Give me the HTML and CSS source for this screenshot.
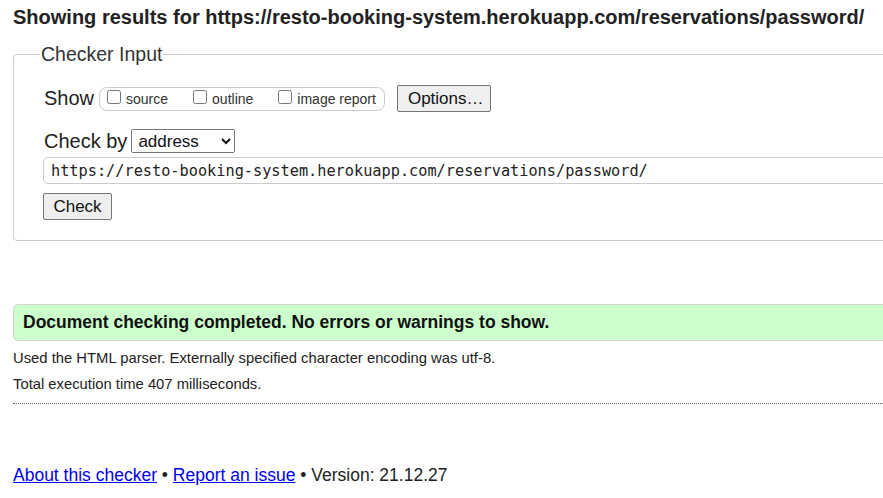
FILE: index.html
```html
<!DOCTYPE html>
<html lang="en">
<head>
<meta charset="utf-8">
<title>Showing results for https://resto-booking-system.herokuapp.com/reservations/password/ - Nu Html Checker</title>
<link rel="stylesheet" href="styles.css">
</head>
<body>
<div class="page">
  <h2 class="title">Showing results for https://resto-booking-system.herokuapp.com/reservations/password/</h2>
  <fieldset class="checker">
    <legend class="legend">Checker Input</legend>
    <div class="row show-row">
      <span class="label">Show</span>
      <span class="group">
        <label class="opt"><input type="checkbox" class="cb">source</label>
        <label class="opt"><input type="checkbox" class="cb">outline</label>
        <label class="opt"><input type="checkbox" class="cb">image report</label>
      </span>
      <button class="btn options">Options…</button>
    </div>
    <div class="row by-row">
      <span class="label">Check by</span>
      <select class="sel"><option>address</option></select>
    </div>
    <input class="url" type="text" value="https://resto-booking-system.herokuapp.com/reservations/password/">
    <div class="row submit-row"><button class="btn check">Check</button></div>
  </fieldset>
  <p class="success">Document checking completed. No errors or warnings to show.</p>
  <p class="info">Used the HTML parser. Externally specified character encoding was utf-8.</p>
  <p class="info">Total execution time 407 milliseconds.</p>
  <hr class="rule">
  <p class="footer"><a href="#" class="link">About this checker</a> • <a href="#" class="link">Report an issue</a> • Version: 21.12.27</p>
</div>
</body>
</html>
```
FILE: styles.css
```css
html { overflow: hidden; }
body {
  margin: 0;
  font-family: Arial, "Liberation Sans", sans-serif;
  color: #222;
  background: #fff;
}
.page {
  width: 1000px;
  padding: 0 0 0 13px;
}
.title {
  margin: 0;
  padding-top: 6px;
  font-size: 20px;
  font-weight: bold;
  line-height: 22px;
  color: #222;
}
.checker {
  margin: 15px 0 0 0;
  padding: 20px 0 20px 30px;
  border: 1px solid #ccc;
  border-radius: 4px;
}
.legend {
  padding: 0 1px;
  margin-left: -4px;
  font-size: 19.5px;
  line-height: 22px;
  color: #333;
}
.row {
  display: flex;
  align-items: center;
}
.label {
  font-size: 20px;
  color: #222;
  margin-right: 4px;
}
.show-row { height: 27px; margin-top: 0; }
.group {
  display: flex;
  align-items: center;
  height: 22px;
  border: 1px solid #ccc;
  border-radius: 8px;
  padding: 0 8px 0 7px;
  margin-left: 1px;
  gap: 25px;
  font-size: 14px;
  color: #333;
}
.opt { display: flex; align-items: center; }
.cb { margin: 0 5px 3px 0; width: 14px; height: 14px; }
.btn {
  font-family: Arial, "Liberation Sans", sans-serif;
  font-size: 17px;
  color: #111;
  background: #efefef;
  border: 1px solid #767676;
  border-radius: 2px;
  padding: 0 10px;
  height: 27px;
}
.options { margin-left: 12px; width: 94px; }
.by-row { margin-top: 17px; height: 24px; }
.sel {
  font-family: Arial, "Liberation Sans", sans-serif;
  font-size: 17px;
  height: 24px;
  width: 104px;
  border: 1px solid #767676;
  border-radius: 2px;
  background: #fff;
  color: #111;
  padding: 0 2px;
}
.url {
  display: block;
  box-sizing: border-box;
  margin: 4px 0 0 -1px;
  width: 1200px;
  height: 27px;
  border: 1px solid #ccc;
  border-radius: 5px;
  padding: 0 7px;
  font-family: "DejaVu Sans Mono", "Liberation Mono", monospace;
  font-size: 15.25px;
  color: #222;
}
.submit-row { margin-top: 9px; margin-left: -1px; }
.check { width: 69px; padding: 0; }
.success {
  margin: 63px 0 0 0;
  height: 37px;
  box-sizing: border-box;
  line-height: 35px;
  padding-left: 9px;
  background: #ccffcc;
  border: 1px solid #d4d4d4;
  border-radius: 5px;
  font-size: 17.5px;
  font-weight: bold;
  color: #111;
}
.info {
  margin: 9px 0 0 0;
  font-size: 14.8px;
  line-height: 17px;
  color: #222;
}
.info + .info { margin-top: 9px; }
.rule {
  margin: 10px 0 0 0;
  border: 0;
  border-top: 1px dotted #666;
  height: 0;
}
.footer {
  margin: 61px 0 0 0;
  font-size: 17.5px;
  line-height: 20px;
  color: #222;
}
.link { color: #0000ee; text-decoration: underline; }
```
